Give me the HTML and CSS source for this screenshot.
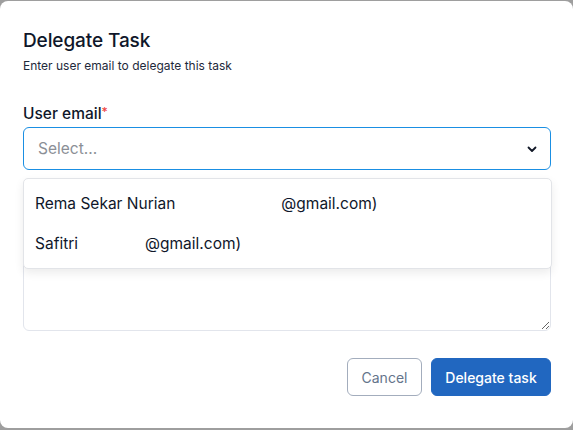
FILE: index.html
```html
<!DOCTYPE html>
<html>
<head>
<meta charset="utf-8">
<link rel="stylesheet" href="styles.css">
</head>
<body>
<div class="modal">
  <h1 class="title">Delegate Task</h1>
  <p class="subtitle">Enter user email to delegate this task</p>
  <div class="field">
    <label class="label">User email<span class="req">*</span></label>
    <div class="select-wrap">
      <div class="select">
        <span class="placeholder">Select...</span>
        <svg class="chev" width="12" height="12" viewBox="0 0 12 12"><path d="M2.5 4.5 L6 8 L9.5 4.5" fill="none" stroke="#111827" stroke-width="1.8" stroke-linecap="round" stroke-linejoin="round"/></svg>
      </div>
      <div class="menu">
        <div class="option">Rema Sekar Nurian<span class="redact r1"></span>@gmail.com)</div>
        <div class="option">Safitri<span class="redact r2"></span>@gmail.com)</div>
      </div>
    </div>
  </div>
  <div class="notes">
    <textarea class="textarea"></textarea>
  </div>
  <div class="actions">
    <button class="btn cancel">Cancel</button>
    <button class="btn primary">Delegate task</button>
  </div>
</div>
</body>
</html>
```

FILE: styles.css
```css
html, body {
  margin: 0;
  padding: 0;
  background: #9e9e9e;
  height: 430px;
  overflow: hidden;
}
.modal {
  box-sizing: border-box;
  margin-top: 1px;
  width: 573px;
  height: 427px;
  background: #fff;
  border-radius: 8px;
  padding: 28px 22px 0 23px;
  font-family: Inter, "Noto Sans", sans-serif;
  color: #0f172a;
}
.title {
  margin: 0;
  font-size: 19px;
  font-weight: 500;
  line-height: 24px;
  letter-spacing: -0.1px;
}
.subtitle {
  margin: 5px 0 0;
  font-size: 12px;
  line-height: 16px;
  color: #1e293b;
}
.field {
  margin-top: 30px;
  position: relative;
  z-index: 2;
}
.label {
  display: block;
  font-size: 15.5px;
  font-weight: 500;
  line-height: 20px;
  color: #0f172a;
}
.req {
  color: #ef4444;
  font-size: 12px;
  vertical-align: top;
  position: relative;
  top: -2px;
}
.select-wrap {
  position: relative;
  margin-top: 3px;
}
.select {
  box-sizing: border-box;
  height: 43px;
  border: 1.4px solid #1a8fe3;
  border-radius: 6px;
  display: flex;
  align-items: center;
  justify-content: space-between;
  padding: 0 12px 0 14px;
}
.placeholder {
  font-size: 15.5px;
  color: #8b8f96;
}
.chev {
  display: block;
}
.menu {
  position: absolute;
  left: 0;
  right: -1px;
  top: 51px;
  background: #fff;
  border: 1px solid #e2e4e8;
  border-radius: 5px;
  box-shadow: 0 4px 10px rgba(0,0,0,0.08);
  padding: 4px 0 5px;
}
.option {
  height: 40px;
  display: flex;
  align-items: center;
  padding: 0 11px;
  font-size: 15.5px;
  color: #0f172a;
  white-space: nowrap;
}
.redact {
  display: inline-block;
  height: 1px;
}
.r1 { width: 106px; }
.r2 { width: 67px; }
.notes {
  margin-top: 40px;
}
.textarea {
  display: block;
  box-sizing: border-box;
  width: 528px;
  height: 121px;
  border: 1px solid #e2e5ec;
  border-radius: 6px;
  resize: vertical;
  font-family: inherit;
}
.actions {
  display: flex;
  justify-content: flex-end;
  gap: 9px;
  margin-top: 27px;
}
.btn {
  height: 38px;
  border-radius: 6px;
  font-family: Inter, "Noto Sans", sans-serif;
  font-size: 14px;
  padding: 0;
  white-space: nowrap;
}
.cancel {
  width: 75px;
  background: #fff;
  border: 1px solid #a3adbd;
  color: #64748b;
}
.primary {
  width: 120px;
  background: #2167c0;
  border: 1px solid #2167c0;
  color: #fff;
  font-weight: 500;
}
```
